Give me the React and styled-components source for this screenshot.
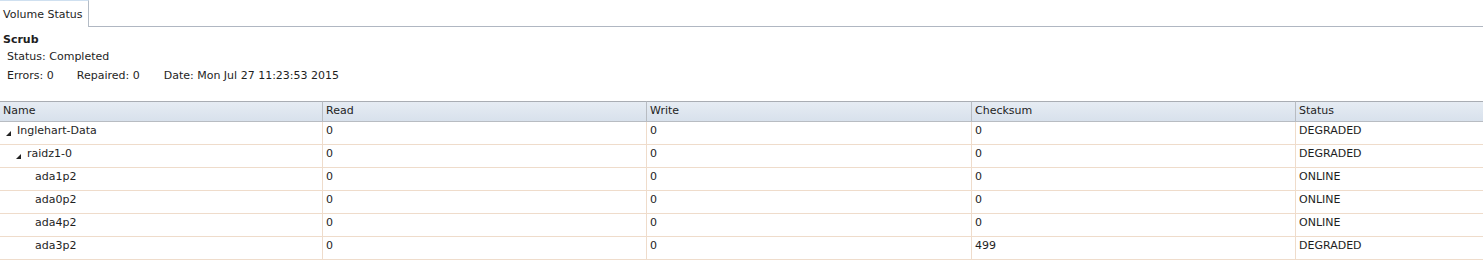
import React from 'react';
import styled, { createGlobalStyle } from 'styled-components';

const Global = createGlobalStyle`
  body {
    margin: 0;
    background: #ffffff;
    font-family: "DejaVu Sans", "Liberation Sans", sans-serif;
    font-size: 11px;
    color: #1e1e1e;
  }
`;

const TabBar = styled.div`
  display: flex;
  height: 27px;
`;

const Tab = styled.div`
  width: 89px;
  height: 27px;
  box-sizing: border-box;
  border-top: 1px solid #cfe0f0;
  border-right: 1px solid #b4bcc6;
  padding: 7px 0 0 3px;
  background: #ffffff;
`;

const TabRest = styled.div`
  flex: 1;
  border-bottom: 1px solid #b0b7c2;
`;

const Summary = styled.div`
  padding: 6px 0 0 3px;
  height: 74px;
  box-sizing: border-box;
`;

const Title = styled.div`
  font-weight: bold;
  line-height: 14px;
`;

const Line = styled.div`
  display: flex;
  padding-left: 4px;
  margin-top: ${p => p.$gap}px;
  line-height: 14px;
`;

const Field = styled.span`
  margin-right: ${p => p.$space}px;
`;

const Table = styled.div`
  display: grid;
  grid-template-columns: 322px 324px 325px 324px 1fr;
`;

const Head = styled.div`
  height: 19px;
  line-height: 17px;
  padding-left: 3px;
  border-top: 1px solid #a9adb3;
  border-bottom: 1px solid #b8bcc2;
  border-left: ${p => (p.$first ? 'none' : '1px solid #b8bcc2')};
  background: linear-gradient(#e6ecf3, #d8e1ec);
`;

const Cell = styled.div`
  height: 22px;
  line-height: 18px;
  padding-left: ${p => p.$indent || 3}px;
  border-bottom: 1px solid #efdccb;
  border-left: ${p => (p.$first ? 'none' : '1px solid #efdccb')};
  display: flex;
  align-items: flex-start;
`;

const Toggle = styled.span`
  width: 10px;
  display: inline-flex;
  align-items: flex-end;
  height: 14px;
  margin-right: 1px;
`;

const Arrow = () => (
  <svg width="5" height="5" viewBox="0 0 5 5">
    <polygon points="5,0 5,5 0,5" fill="#222" />
  </svg>
);

const indents = [6, 16, 24];

const rows = [
  { name: 'Inglehart-Data', level: 0, open: true, read: 0, write: 0, sum: 0, status: 'DEGRADED' },
  { name: 'raidz1-0', level: 1, open: true, read: 0, write: 0, sum: 0, status: 'DEGRADED' },
  { name: 'ada1p2', level: 2, read: 0, write: 0, sum: 0, status: 'ONLINE' },
  { name: 'ada0p2', level: 2, read: 0, write: 0, sum: 0, status: 'ONLINE' },
  { name: 'ada4p2', level: 2, read: 0, write: 0, sum: 0, status: 'ONLINE' },
  { name: 'ada3p2', level: 2, read: 0, write: 0, sum: 499, status: 'DEGRADED' },
];

export default function App() {
  return (
    <>
      <Global />
      <TabBar>
        <Tab>Volume Status</Tab>
        <TabRest />
      </TabBar>
      <Summary>
        <Title>Scrub</Title>
        <Line $gap={3}>Status: Completed</Line>
        <Line $gap={5}>
          <Field $space={23}>Errors: 0</Field>
          <Field $space={24}>Repaired: 0</Field>
          <Field $space={0}>Date: Mon Jul 27 11:23:53 2015</Field>
        </Line>
      </Summary>
      <Table>
        <Head $first>Name</Head>
        <Head>Read</Head>
        <Head>Write</Head>
        <Head>Checksum</Head>
        <Head>Status</Head>
        {rows.map(r => (
          <React.Fragment key={r.name}>
            <Cell $first $indent={indents[r.level]}>
              <Toggle>{r.open && <Arrow />}</Toggle>
              {r.name}
            </Cell>
            <Cell>{r.read}</Cell>
            <Cell>{r.write}</Cell>
            <Cell>{r.sum}</Cell>
            <Cell>{r.status}</Cell>
          </React.Fragment>
        ))}
      </Table>
    </>
  );
}
